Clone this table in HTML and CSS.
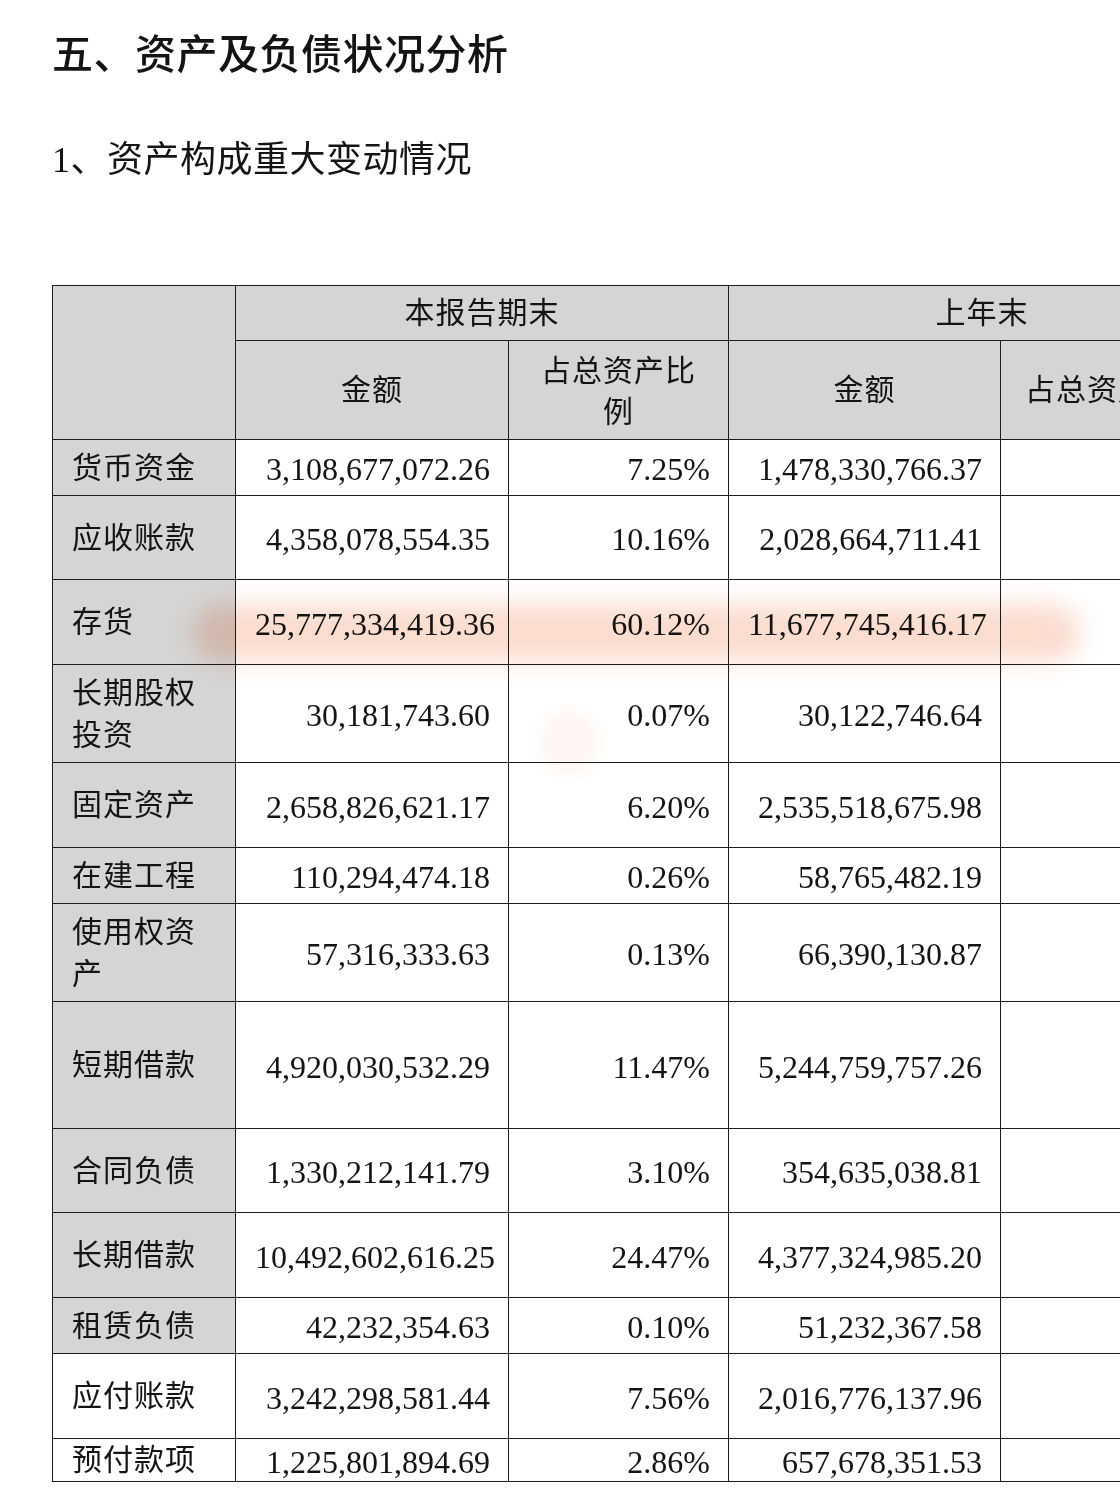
FILE: index.html
```html
<!DOCTYPE html>
<html lang="zh-CN">
<head>
<meta charset="utf-8">
<title>资产及负债状况分析</title>
<link rel="stylesheet" href="styles.css">
</head>
<body>
<div class="page">
  <h1 class="title">五、资产及负债状况分析</h1>
  <h2 class="subtitle">1、资产构成重大变动情况</h2>
  <table class="sheet">
    <colgroup>
      <col class="c-name">
      <col class="c-amt">
      <col class="c-pct">
      <col class="c-amt2">
      <col class="c-pct2">
    </colgroup>
    <thead>
      <tr class="h55">
        <th class="grey" rowspan="2"></th>
        <th class="grey" colspan="2">本报告期末</th>
        <th class="grey" colspan="2">上年末</th>
      </tr>
      <tr class="h99">
        <th class="grey">金额</th>
        <th class="grey wrap">占总资产比例</th>
        <th class="grey">金额</th>
        <th class="grey last">占总资产比例</th>
      </tr>
    </thead>
    <tbody>
      <tr class="h56"><td class="name grey">货币资金</td><td class="num">3,108,677,072.26</td><td class="pct">7.25%</td><td class="num">1,478,330,766.37</td><td></td></tr>
      <tr class="h84"><td class="name grey">应收账款</td><td class="num">4,358,078,554.35</td><td class="pct">10.16%</td><td class="num">2,028,664,711.41</td><td></td></tr>
      <tr class="h85"><td class="name grey">存货</td><td class="num">25,777,334,419.36</td><td class="pct">60.12%</td><td class="num">11,677,745,416.17</td><td></td></tr>
      <tr class="h98"><td class="name grey">长期股权投资</td><td class="num">30,181,743.60</td><td class="pct">0.07%</td><td class="num">30,122,746.64</td><td></td></tr>
      <tr class="h85"><td class="name grey">固定资产</td><td class="num">2,658,826,621.17</td><td class="pct">6.20%</td><td class="num">2,535,518,675.98</td><td></td></tr>
      <tr class="h56"><td class="name grey">在建工程</td><td class="num">110,294,474.18</td><td class="pct">0.26%</td><td class="num">58,765,482.19</td><td></td></tr>
      <tr class="h98"><td class="name grey">使用权资产</td><td class="num">57,316,333.63</td><td class="pct">0.13%</td><td class="num">66,390,130.87</td><td></td></tr>
      <tr class="h127"><td class="name grey">短期借款</td><td class="num">4,920,030,532.29</td><td class="pct">11.47%</td><td class="num">5,244,759,757.26</td><td></td></tr>
      <tr class="h84"><td class="name grey">合同负债</td><td class="num">1,330,212,141.79</td><td class="pct">3.10%</td><td class="num">354,635,038.81</td><td></td></tr>
      <tr class="h85"><td class="name grey">长期借款</td><td class="num">10,492,602,616.25</td><td class="pct">24.47%</td><td class="num">4,377,324,985.20</td><td></td></tr>
      <tr class="h56"><td class="name grey">租赁负债</td><td class="num">42,232,354.63</td><td class="pct">0.10%</td><td class="num">51,232,367.58</td><td></td></tr>
      <tr class="h85"><td class="name">应付账款</td><td class="num">3,242,298,581.44</td><td class="pct">7.56%</td><td class="num">2,016,776,137.96</td><td></td></tr>
      <tr class="h42"><td class="name">预付款项</td><td class="num">1,225,801,894.69</td><td class="pct">2.86%</td><td class="num">657,678,351.53</td><td></td></tr>
    </tbody>
  </table>
  <div class="glow"></div>
  <div class="spot"></div>
</div>
</body>
</html>
```

FILE: styles.css
```css
html, body {
  margin: 0;
  padding: 0;
  background: #ffffff;
}

.page {
  position: relative;
  width: 1120px;
  height: 1502px;
  overflow: hidden;
  padding-left: 52px;
  box-sizing: border-box;
  color: #141414;
  font-family: "Liberation Serif", "Noto Sans CJK SC", serif;
}

.title {
  margin: 30px 0 0 0;
  font-size: 41px;
  line-height: 50px;
  font-weight: 500;
  letter-spacing: 0.5px;
}

.subtitle {
  margin: 58px 0 0 0;
  font-size: 36px;
  line-height: 44px;
  font-weight: 400;
  letter-spacing: 0.5px;
}

.sheet {
  margin-top: 103px;
  border-collapse: collapse;
  table-layout: fixed;
  width: 1183px;
  font-size: 30px;
}

.c-name { width: 183px; }
.c-amt { width: 273px; }
.c-pct { width: 220px; }
.c-amt2 { width: 272px; }
.c-pct2 { width: 235px; }

.sheet th,
.sheet td {
  border: 1px solid #1c1c1c;
  padding: 0 19px;
  vertical-align: middle;
  line-height: 40px;
}

.sheet th {
  font-weight: 400;
  text-align: center;
  letter-spacing: 1px;
  white-space: nowrap;
}

.sheet th.wrap {
  white-space: normal;
  padding: 2px 30px 0;
  line-height: 41px;
}

.sheet th.last {
  padding: 0 10px;
}

.grey {
  background: #d5d5d5;
}

.name {
  text-align: left;
  letter-spacing: 1px;
  padding-left: 19px;
}

.sheet td.name {
  line-height: 42px;
}

.h42 .name {
  line-height: 40px;
}

.sheet td.num,
.sheet td.pct {
  text-align: right;
  padding-right: 18px;
  padding-top: 3px;
  font-size: 32px;
  line-height: 36px;
  white-space: nowrap;
}

.h55 { height: 55px; }
.h99 { height: 99px; }
.h56 { height: 56px; }
.h84 { height: 84px; }
.h85 { height: 85px; }
.h98 { height: 98px; }
.h127 { height: 127px; }
.h42 { height: 41px; }

.glow {
  position: absolute;
  left: 192px;
  top: 604px;
  width: 888px;
  height: 58px;
  border-radius: 30px;
  background: rgb(246, 186, 158);
  opacity: 0.5;
  filter: blur(12px);
  mix-blend-mode: multiply;
  pointer-events: none;
}

.spot {
  position: absolute;
  left: 540px;
  top: 710px;
  width: 58px;
  height: 66px;
  border-radius: 50%;
  background: rgb(252, 232, 222);
  opacity: 0.4;
  filter: blur(7px);
  mix-blend-mode: multiply;
  pointer-events: none;
}
```
